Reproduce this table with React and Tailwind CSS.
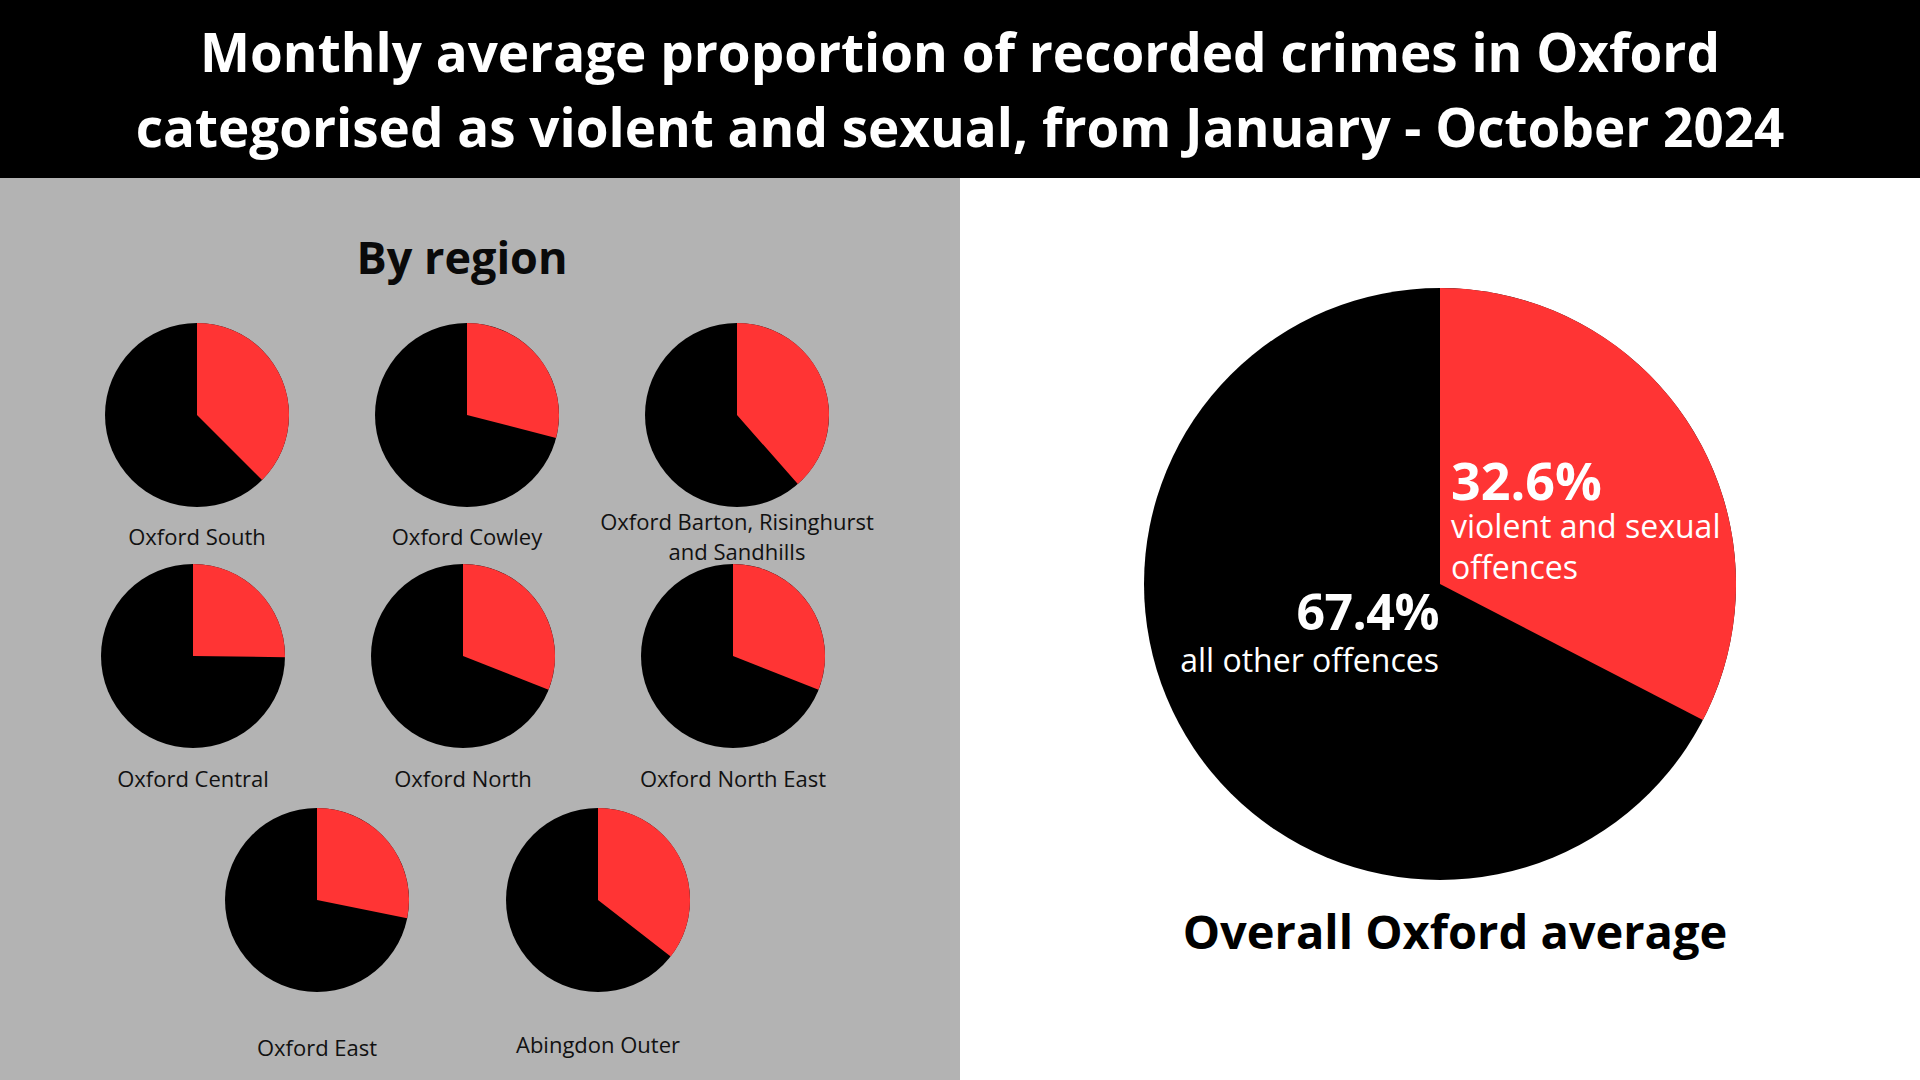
import React from "react";

const RED = "#ff3434";

function Pie({ size, frac }) {
  const r = size / 2;
  const a = frac * 2 * Math.PI;
  const x = r + r * Math.sin(a);
  const y = r - r * Math.cos(a);
  const large = frac > 0.5 ? 1 : 0;
  return (
    <svg width={size} height={size} viewBox={`0 0 ${size} ${size}`} className="block">
      <circle cx={r} cy={r} r={r} fill="#000" />
      <path d={`M ${r} ${r} L ${r} 0 A ${r} ${r} 0 ${large} 1 ${x} ${y} Z`} fill={RED} />
    </svg>
  );
}

function Cell({ frac, label, labelH = "h-[60px]", extra = "" }) {
  return (
    <div className="w-[270px] flex flex-col items-center">
      <Pie size={184} frac={frac} />
      <div className={`${labelH} ${extra} flex flex-col items-center justify-center text-center whitespace-nowrap text-[22px] leading-[30px] text-[#111]`}>
        {label}
      </div>
    </div>
  );
}

export default function App() {
  return (
    <div
      className="w-[1920px] h-[1080px] overflow-hidden flex flex-col"
      style={{ fontFamily: '"Open Sans", "Noto Sans", sans-serif' }}
    >
      <header className="h-[178px] bg-black flex flex-col items-center justify-center text-white font-bold text-[53px] leading-[75px]">
        <div>Monthly average proportion of recorded crimes in Oxford</div>
        <div>categorised as violent and sexual, from January - October 2024</div>
      </header>
      <main className="flex flex-1 min-h-0">
        <section className="w-[960px] bg-[#b3b3b3] flex flex-col">
          <div className="h-[145px] pt-[11px] pr-[36px] flex items-center justify-center">
            <h2 className="text-[45px] font-bold leading-none text-[#0a0a0a]">By region</h2>
          </div>
          <div className="flex pl-[62px]">
            <Cell frac={0.375} label="Oxford South" labelH="h-[57px]" />
            <Cell frac={0.29} label="Oxford Cowley" labelH="h-[57px]" />
            <Cell
              frac={0.385}
              labelH="h-[57px]"
              label={
                <>
                  <span>Oxford Barton, Risinghurst</span>
                  <span>and Sandhills</span>
                </>
              }
            />
          </div>
          <div className="flex pl-[58px]">
            <Cell frac={0.252} label="Oxford Central" />
            <Cell frac={0.31} label="Oxford North" />
            <Cell frac={0.31} label="Oxford North East" />
          </div>
          <div className="flex pl-[182px] gap-[11px]">
            <Cell frac={0.282} label="Oxford East" extra="mt-[25px]" />
            <Cell frac={0.355} label="Abingdon Outer" extra="mt-[22px]" />
          </div>
        </section>
        <section className="flex-1 bg-white flex flex-col items-center">
          <div className="relative mt-[110px] w-[592px] h-[592px]">
            <Pie size={592} frac={0.326} />
            <div className="absolute left-[307px] top-[167px] text-white">
              <div className="text-[52px] font-bold leading-[50px]">32.6%</div>
              <div className="text-[32px] leading-[41px]">violent and sexual</div>
              <div className="text-[32px] leading-[41px]">offences</div>
            </div>
            <div className="absolute right-[297px] top-[298px] text-white flex flex-col items-end">
              <div className="text-[50px] font-bold leading-[50px] tracking-[-0.5px]">67.4%</div>
              <div className="text-[32px] leading-[41px] mt-[3px]">all other offences</div>
            </div>
          </div>
          <h2 className="mt-[21px] pl-[30px] text-[47px] leading-[60px] font-bold text-black">
            Overall Oxford average
          </h2>
        </section>
      </main>
    </div>
  );
}
